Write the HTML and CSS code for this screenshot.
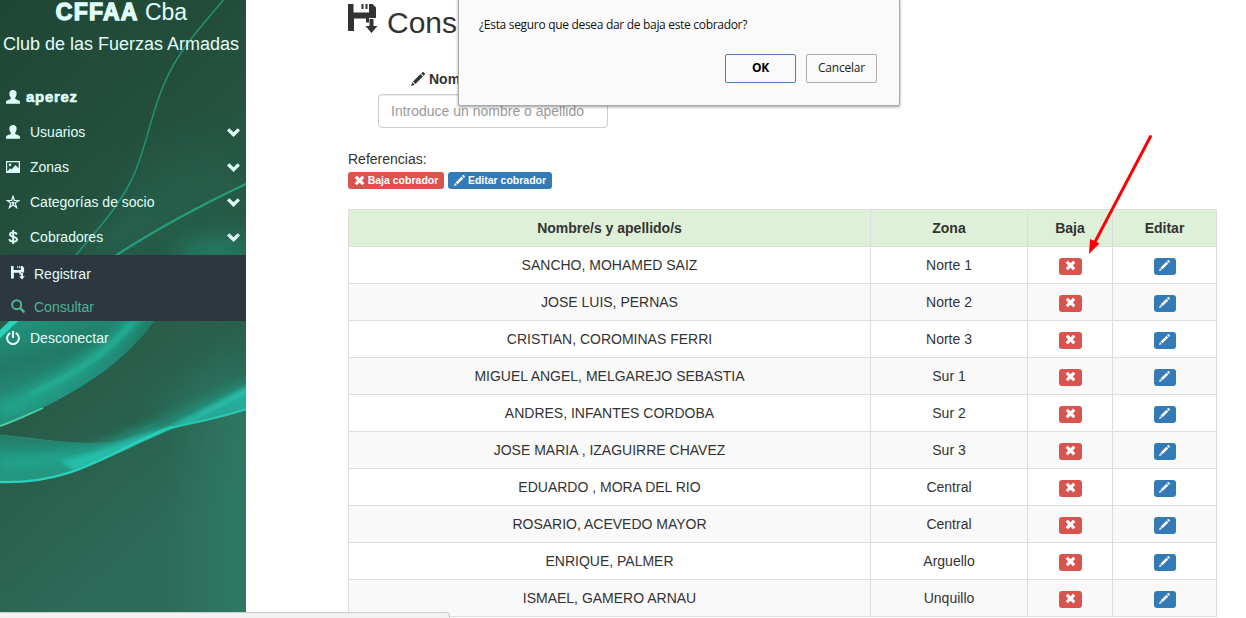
FILE: index.html
```html
<!DOCTYPE html>
<html lang="es">
<head>
<meta charset="utf-8">
<title>Consultar cobradores</title>
<link rel="stylesheet" href="styles.css">
</head>
<body>
<svg class="defs" width="0" height="0">
  <symbol id="user" viewBox="0 0 14 14"><path d="M7 0C9.200 0 10.600 1.200 10.600 3.600c0 1.700-.5 2.900-1.300 3.900-.4.6-.3 1.300.5 1.700l3.100 1.300c.7.4 1.100.9 1.100 2.300v.9H0v-.9c0-1.400.4-1.900 1.100-2.300l3.100-1.300c.8-.4.9-1.100.5-1.700C3.900 6.500 3.400 5.300 3.400 3.600 3.400 1.200 4.800 0 7 0z"/></symbol>
  <symbol id="picture" viewBox="0 0 14 14"><path fill-rule="evenodd" d="M0 1h14v12H0zM1.200 2.200v9.300l3-3.300 1.500 1.200 3.600-4.300 3.400 3.100v-6zM4 3.500a1.300 1.300 0 1 1 0 2.700 1.300 1.300 0 0 1 0-2.700z"/></symbol>
  <symbol id="star" viewBox="0 0 14 14"><path fill="none" stroke="currentColor" stroke-width="1.200" d="M7 1.300l1.400 4.200h4.600L9.200 8l1.400 4.600L7 9.800l-3.600 2.800L4.800 8 1 5.500h4.600z"/><path d="M7 5.600l.6 1.500h1.500L7.900 8l.4 1.500L7 8.700l-1.300.8.4-1.500-1.200-.9h1.500z"/></symbol>
  <symbol id="dollar" viewBox="0 0 14 14"><path fill="none" stroke="currentColor" stroke-width="1.900" d="M10.700 4.500C10.400 3 9.200 2.400 7.200 2.400 5.200 2.400 4 3.200 4 4.500c0 3.200 7 1.600 7 5 0 1.400-1.300 2.200-3.700 2.200-2.300 0-3.700-.8-4-2.500M7.200 0v14"/></symbol>
  <symbol id="save" viewBox="0 0 30 30"><path d="M0 0h5.500v8.500h15.500V0h3.500L28 3.500V14h-7v4.500h-3V14.500H6V27H0zM13.500 0h2v5h-2zM17.500 0h2v5h-2zM21.500 15h4v7h4l-6 7-6-7h4z"/></symbol>
  <symbol id="search" viewBox="0 0 14 14"><circle cx="5.700" cy="5.700" r="4.500" fill="none" stroke="currentColor" stroke-width="2"/><path fill="none" stroke="currentColor" stroke-width="2.500" stroke-linecap="round" d="M9.200 9.200l3.400 3.400"/></symbol>
  <symbol id="power" viewBox="0 0 14 14"><path fill="none" stroke="currentColor" stroke-width="2" d="M4.300 2A5.900 5.900 0 1 0 9.700 2M7 0v7"/></symbol>
  <symbol id="chevron" viewBox="0 0 13 9"><path d="M2.300.3l4.200 4 4.200-4L13 2.600 6.500 9 0 2.600z"/></symbol>
  <symbol id="pencil" viewBox="0 0 14 14"><path d="M11.200.4c.5-.5 1-.5 1.500 0l.9.9c.5.5.5 1 0 1.500l-1 1-2.400-2.400zM9.500 2.100l2.400 2.400-7.500 7.400-2.400-2.400zM1.300 10.300l2.400 2.400L0 14z"/></symbol>
  <symbol id="remove" viewBox="0 0 12 12"><path d="M3.100.7L6 3.600 8.900.7l2.400 2.200L8.500 6l2.800 3.100-2.400 2.200L6 8.400l-2.900 2.900L.7 9.100 3.500 6 .7 2.900z"/></symbol>
</svg>

<aside class="sidebar">
  <svg class="waves" viewBox="0 0 246 613" preserveAspectRatio="none">
    <defs>
      <linearGradient id="base" x1="0" y1="0" x2=".35" y2="1"><stop offset="0" stop-color="#204634"/><stop offset=".3" stop-color="#234d3b"/><stop offset=".65" stop-color="#285c48"/><stop offset="1" stop-color="#2d6b59"/></linearGradient>
      <linearGradient id="edge" gradientUnits="userSpaceOnUse" x1="165" x2="246" y1="0" y2="0"><stop offset="0" stop-color="#2f8871" stop-opacity="0"/><stop offset="1" stop-color="#2f8871" stop-opacity=".5"/></linearGradient>
      <linearGradient id="haze" x1="0" x2="0" y1="0" y2="1"><stop offset="0" stop-color="#20846b" stop-opacity="0"/><stop offset="1" stop-color="#20846b" stop-opacity=".6"/></linearGradient>
      <linearGradient id="low" x1="0" x2="0" y1="0" y2="1"><stop offset="0" stop-color="#27705b"/><stop offset=".5" stop-color="#219680"/><stop offset="1" stop-color="#259781"/></linearGradient>
      <linearGradient id="mid" x1="0" x2=".4" y1="0" y2="1"><stop offset="0" stop-color="#23977f"/><stop offset=".4" stop-color="#227a65"/><stop offset=".75" stop-color="#229580"/><stop offset="1" stop-color="#267e69"/></linearGradient>
      <linearGradient id="ribbon" x1="0" x2=".25" y1="0" y2="1"><stop offset="0" stop-color="#25b9a4"/><stop offset="1" stop-color="#26a38f"/></linearGradient>
      <filter id="b1" x="-20%" y="-20%" width="140%" height="140%"><feGaussianBlur stdDeviation=".6"/></filter>
      <filter id="b2" x="-20%" y="-30%" width="140%" height="160%"><feGaussianBlur stdDeviation="2"/></filter>
      <filter id="b5" x="-30%" y="-50%" width="160%" height="200%"><feGaussianBlur stdDeviation="6"/></filter>
      <filter id="b12" x="-80%" y="-120%" width="260%" height="340%"><feGaussianBlur stdDeviation="14"/></filter>
      <clipPath id="arc"><path d="M0 319H156C119 371 62 401 0 427z"/></clipPath>
      <clipPath id="above"><path d="M0 320H246V409C225 417 195 421 173 429C126 448 86 472 43 480Q21 483 0 483z"/></clipPath>
    </defs>
    <rect width="246" height="613" fill="url(#base)"/>
    <path d="M165 430L246 409V613H165z" fill="url(#edge)"/>
    <path d="M246 345V430H190L150 410z" fill="#2b806a" opacity=".5" filter="url(#b12)" clip-path="url(#above)"/>
    <path d="M246 184L115 255H75C120 215 135 190 142 150L200 110z" fill="url(#haze)" opacity=".5" filter="url(#b12)"/>
    <ellipse cx="215" cy="254" rx="40" ry="14" fill="#20947b" opacity=".7" filter="url(#b12)"/>
    <g fill="none" filter="url(#b1)">
      <path d="M225-2C200 28 178 51 165 82C151 112 145 155 130 183C116 210 95 233 75 256" stroke="#258e73" stroke-width="1.600"/>
      <path d="M248 183C203 204 155 230 115 256" stroke="#259b80" stroke-width="2.200"/>
    </g>
    <path d="M0 319H156C119 371 62 401 0 427z" fill="url(#mid)"/>
    <g clip-path="url(#arc)" fill="none">
      <path d="M138 315C112 348 84 371 0 412" stroke="#22a48c" stroke-width="14" filter="url(#b5)"/>
      <path d="M138 316C112 348 84 371 30 394" stroke="#26b69c" stroke-width="4" filter="url(#b2)" opacity=".8"/>
      <path d="M0 319H18L0 338z" fill="#285f4b"/>
      <path d="M-2 336L20 315" stroke="#2bd3b7" stroke-width="6" filter="url(#b1)"/>
    </g>
    <path d="M0 426C15 421 29 414 43 408" fill="none" stroke="#4ed1a6" stroke-width="1.800" filter="url(#b1)"/>
    <g clip-path="url(#above)">
      <path d="M100 446C150 426 200 402 252 378V410L172 428z" fill="#23967f" opacity=".8" filter="url(#b5)"/>
      <path d="M0 435C48 440 78 446 111 442C140 435 160 427 173 429C126 448 86 472 43 480Q21 483 0 483z" fill="url(#low)"/>
      <path d="M170 429C198 417 223 402 250 388V412L190 424z" fill="url(#ribbon)" filter="url(#b1)"/>
      <path d="M0 463C67 463 99 448 160 431" fill="none" stroke="#24ac97" stroke-width="6" filter="url(#b5)"/>
      <path d="M172 427C198 416 223 401 249 388" fill="none" stroke="#29c7b3" stroke-width="4" filter="url(#b2)"/>
      <path d="M60 461C100 453 150 430 176 425L165 433C132 447 105 461 75 472z" fill="#26c4b0" opacity=".85" filter="url(#b2)"/>
    </g>
    <path d="M0 482C79 484 112 449 172 427" fill="none" stroke="#2bd0bb" stroke-width="2.400" filter="url(#b1)"/>
    <path d="M160 431C166 429 170 428 174 427C202 421 224 417 249 408" fill="none" stroke="#28c8b2" stroke-width="2" filter="url(#b1)"/>
    <path d="M0 435C48 440 78 446 111 442" fill="none" stroke="#298a72" stroke-width="1"/>
  </svg>
  <header class="brand">
    <div class="brand-name"><b>CFFAA</b> Cba</div>
    <div class="brand-sub">Club de las Fuerzas Armadas</div>
  </header>
  <nav class="menu">
    <a class="item me"><svg><use href="#user"/></svg><b>aperez</b></a>
    <a class="item"><svg><use href="#user"/></svg><span>Usuarios</span><svg class="chev"><use href="#chevron"/></svg></a>
    <a class="item"><svg><use href="#picture"/></svg><span>Zonas</span><svg class="chev"><use href="#chevron"/></svg></a>
    <a class="item"><svg><use href="#star"/></svg><span>Categorías de socio</span><svg class="chev"><use href="#chevron"/></svg></a>
    <a class="item"><svg><use href="#dollar"/></svg><span>Cobradores</span><svg class="chev"><use href="#chevron"/></svg></a>
    <div class="submenu">
      <a class="subitem"><svg><use href="#save"/></svg><span>Registrar</span></a>
      <a class="subitem active"><svg><use href="#search"/></svg><span>Consultar</span></a>
    </div>
    <a class="item"><svg><use href="#power"/></svg><span>Desconectar</span></a>
  </nav>
</aside>

<main class="content">
  <h2 class="title"><svg><use href="#save"/></svg><span>Cons</span></h2>
  <div class="search">
    <label class="search-label"><svg><use href="#pencil"/></svg><span>Nom</span></label>
    <div class="field">Introduce un nombre o apellido</div>
  </div>
  <div class="refs">Referencias:</div>
  <div class="legend">
    <span class="tag red"><svg><use href="#remove"/></svg>Baja cobrador</span>
    <span class="tag blue"><svg><use href="#pencil"/></svg>Editar cobrador</span>
  </div>
  <table class="grid">
    <colgroup><col class="c1"><col class="c2"><col class="c3"><col class="c4"></colgroup>
    <thead><tr><th>Nombre/s y apellido/s</th><th>Zona</th><th>Baja</th><th>Editar</th></tr></thead>
    <tbody>
      <tr><td>SANCHO, MOHAMED SAIZ</td><td>Norte 1</td><td><i class="btn red"><svg><use href="#remove"/></svg></i></td><td><i class="btn blue"><svg><use href="#pencil"/></svg></i></td></tr>
      <tr><td>JOSE LUIS, PERNAS</td><td>Norte 2</td><td><i class="btn red"><svg><use href="#remove"/></svg></i></td><td><i class="btn blue"><svg><use href="#pencil"/></svg></i></td></tr>
      <tr><td>CRISTIAN, COROMINAS FERRI</td><td>Norte 3</td><td><i class="btn red"><svg><use href="#remove"/></svg></i></td><td><i class="btn blue"><svg><use href="#pencil"/></svg></i></td></tr>
      <tr><td>MIGUEL ANGEL, MELGAREJO SEBASTIA</td><td>Sur 1</td><td><i class="btn red"><svg><use href="#remove"/></svg></i></td><td><i class="btn blue"><svg><use href="#pencil"/></svg></i></td></tr>
      <tr><td>ANDRES, INFANTES CORDOBA</td><td>Sur 2</td><td><i class="btn red"><svg><use href="#remove"/></svg></i></td><td><i class="btn blue"><svg><use href="#pencil"/></svg></i></td></tr>
      <tr><td>JOSE MARIA , IZAGUIRRE CHAVEZ</td><td>Sur 3</td><td><i class="btn red"><svg><use href="#remove"/></svg></i></td><td><i class="btn blue"><svg><use href="#pencil"/></svg></i></td></tr>
      <tr><td>EDUARDO , MORA DEL RIO</td><td>Central</td><td><i class="btn red"><svg><use href="#remove"/></svg></i></td><td><i class="btn blue"><svg><use href="#pencil"/></svg></i></td></tr>
      <tr><td>ROSARIO, ACEVEDO MAYOR</td><td>Central</td><td><i class="btn red"><svg><use href="#remove"/></svg></i></td><td><i class="btn blue"><svg><use href="#pencil"/></svg></i></td></tr>
      <tr><td>ENRIQUE, PALMER</td><td>Arguello</td><td><i class="btn red"><svg><use href="#remove"/></svg></i></td><td><i class="btn blue"><svg><use href="#pencil"/></svg></i></td></tr>
      <tr><td>ISMAEL, GAMERO ARNAU</td><td>Unquillo</td><td><i class="btn red"><svg><use href="#remove"/></svg></i></td><td><i class="btn blue"><svg><use href="#pencil"/></svg></i></td></tr>
    </tbody>
  </table>
</main>

<div class="dialog">
  <p class="dialog-text">¿Esta seguro que desea dar de baja este cobrador?</p>
  <div class="dialog-actions"><button class="ok">OK</button><button>Cancelar</button></div>
</div>
<svg class="arrow" viewBox="0 0 70 125"><path d="M62.500 2.500L7.500 107" stroke="#fb0207" stroke-width="3" stroke-linecap="round"/><path d="M1 120L2 105L6.500 107L11.500 109.500z" fill="#fb0207"/></svg>
<div class="status"></div>
</body>
</html>
```
FILE: styles.css
```css
* { box-sizing: border-box; }
body {
  margin: 0;
  width: 1246px;
  height: 618px;
  overflow: hidden;
  position: relative;
  display: flex;
  background: #fff;
  color: #333;
  font: 14px/20px "Liberation Sans", Arial, sans-serif;
}
svg { display: block; fill: currentColor; flex: none; }
.defs { position: absolute; }

.sidebar { position: relative; width: 246px; height: 613px; overflow: hidden; color: #e1fffa; }
.waves { position: absolute; inset: 0; width: 246px; height: 613px; }
.brand { position: relative; height: 80px; white-space: nowrap; text-align: center; }
.brand-name { font-size: 23px; line-height: 24px; padding-right: 3px; }
.brand-name b { -webkit-text-stroke: 1.3px currentColor; letter-spacing: 1.2px; }
.brand-sub { font-size: 18px; line-height: 22px; padding-top: 9px; padding-right: 4px; }
.menu { position: relative; }
.item { display: flex; align-items: center; height: 35px; padding: 0 6px 2px; gap: 10px; }
.item svg { width: 14px; height: 14px; }
.item.me { gap: 6px; }
.item.me b { font-size: 15px; -webkit-text-stroke: .6px currentColor; letter-spacing: .7px; }
.item .chev { width: 13px; height: 9px; margin-left: auto; margin-top: 2px; }
.submenu { height: 66px; background: #2c3740; }
.subitem { display: flex; align-items: center; height: 33px; padding: 4px 11px 0; gap: 9px; }
.subitem svg { width: 14px; height: 14px; margin-top: -2px; }
.subitem.active { color: #4fb490; }

.content { width: 869px; margin-left: 102px; }
.title { display: flex; gap: 9px; height: 68px; margin: 0; padding-top: 4px; font-size: 30px; line-height: 37px; font-weight: 400; }
.title svg { width: 30px; height: 30px; }
.search { width: 260px; padding-left: 30px; }
.search-label { display: flex; align-items: center; gap: 4px; height: 26px; padding: 0 0 4px 33px; font-weight: 700; }
.search-label svg { width: 14px; height: 14px; }
.field { width: 230px; height: 34px; border: 1px solid #ccc; border-radius: 4px; padding: 6px 12px; color: #999; white-space: nowrap; box-shadow: inset 0 1px 1px rgba(0,0,0,.075); }
.refs { margin-top: 21px; }
.legend { display: flex; gap: 4px; padding-top: 3px; }
.tag { display: flex; align-items: center; justify-content: center; gap: 3px; height: 17px; border-radius: 3px; color: #fff; font-size: 10.5px; line-height: 17px; font-weight: 700; white-space: nowrap; }
.tag svg { width: 11px; height: 11px; margin-top: -1px; }
.tag.red { width: 96px; }
.tag.blue { width: 104px; }
.red { background: #d9534f; }
.blue { background: #337ab7; }

.grid { width: 869px; margin-top: 20px; table-layout: fixed; border-collapse: collapse; text-align: center; }
.c1 { width: 522px; }
.c2 { width: 157px; }
.c3 { width: 85px; }
.c4 { width: 104px; }
.grid th, .grid td { height: 37px; padding: 8px; border: 1px solid #ddd; line-height: 20px; }
.grid th { background: #dff0d8; }
.grid tbody tr:nth-child(even) { background: #f9f9f9; }
.btn { display: flex; align-items: center; justify-content: center; width: 23px; height: 17px; margin: 3px auto 0; border-radius: 3px; color: #fff; }
.btn.blue { width: 22px; }
.btn svg { width: 11px; height: 11px; margin-bottom: 2px; }

.dialog { position: absolute; left: 458px; top: -2px; width: 442px; height: 108px; padding: 17px 22px 0 20px; border: 1px solid #aaa; border-radius: 2px; background: #fafafa; color: #111; box-shadow: 0 1px 3px rgba(0,0,0,.4); font: 12px/18px "Open Sans", "Noto Sans", sans-serif; }
.dialog-text { margin: 0; height: 38px; white-space: nowrap; letter-spacing: -.31px; }
.dialog-actions { display: flex; justify-content: flex-end; gap: 10px; }
.dialog-actions button { width: 71px; height: 29px; padding: 0 0 2px; border: 1px solid #adadad; border-radius: 2px; background: #fafafa; color: #222; font: 12px/18px "Open Sans", "Noto Sans", sans-serif; letter-spacing: -.2px; }
.dialog-actions .ok { border-color: #4a7cc4; color: #000; font-weight: 700; }
.arrow { position: absolute; left: 1088px; top: 134px; width: 70px; height: 125px; }
.status { position: absolute; left: -2px; bottom: 0; width: 452px; height: 6px; border: 1px solid #ccc; border-bottom: 0; border-top-right-radius: 4px; background: #f2f2f2; }
```
